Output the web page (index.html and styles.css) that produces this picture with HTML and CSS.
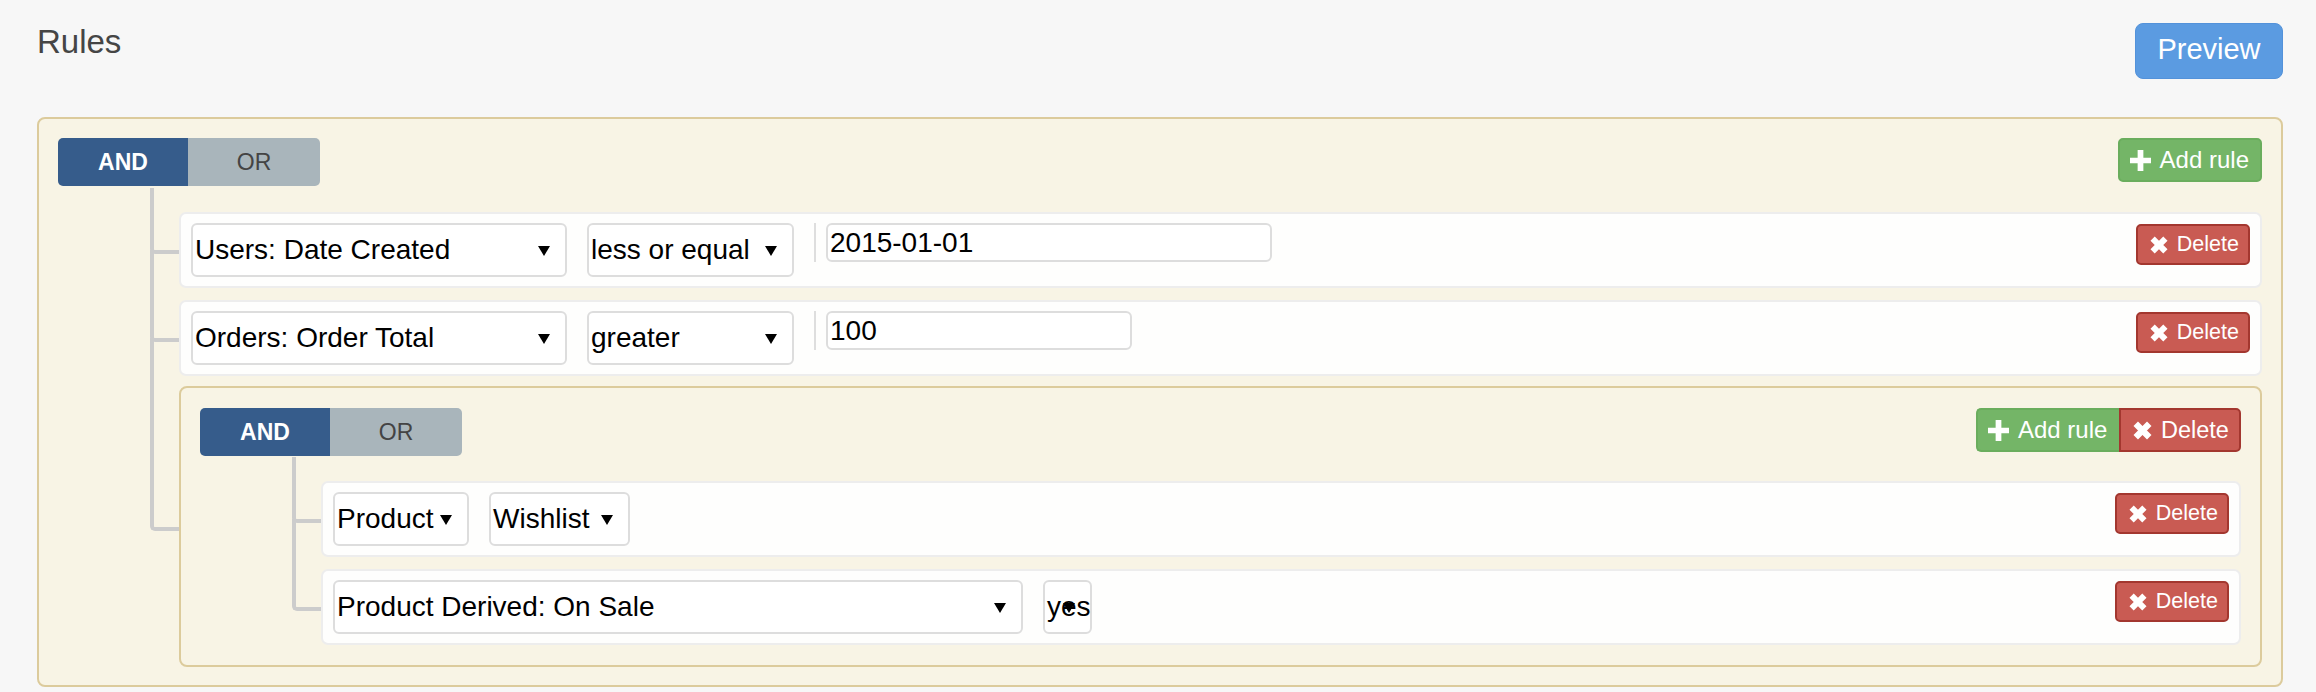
FILE: index.html
```html
<!DOCTYPE html>
<html lang="en">
<head>
<meta charset="utf-8">
<title>Rules</title>
<link rel="stylesheet" href="styles.css">
</head>
<body>
<div class="page">
  <div class="header">
    <h1 class="title">Rules</h1>
    <button class="btn btn-preview">Preview</button>
  </div>

  <div class="group group-root">
    <div class="group-header">
      <div class="toggle">
        <span class="toggle-opt active">AND</span>
        <span class="toggle-opt">OR</span>
      </div>
      <div class="actions">
        <button class="btn btn-success btn-sm">
          <svg class="ico-plus" viewBox="0 0 22 22"><path d="M8 0h6v8h8v6h-8v8H8v-8H0V8h8z" fill="currentColor"/></svg>
          <span>Add rule</span>
        </button>
      </div>
    </div>

    <ul class="rules-list">
      <li class="rule">
        <div class="rule-fields">
          <div class="select w-field">Users: Date Created<i class="caret"></i></div>
          <div class="select w-op">less or equal<i class="caret"></i></div>
          <div class="value-sep"></div>
          <div class="input w-date">2015-01-01</div>
        </div>
        <button class="btn btn-danger btn-xs">
          <svg class="ico-x" viewBox="0 0 18 18"><path d="M2.6 2.6 L15.4 15.4 M15.4 2.6 L2.6 15.4" stroke="currentColor" stroke-width="6"/></svg>
          <span>Delete</span>
        </button>
      </li>

      <li class="rule">
        <div class="rule-fields">
          <div class="select w-field">Orders: Order Total<i class="caret"></i></div>
          <div class="select w-op">greater<i class="caret"></i></div>
          <div class="value-sep"></div>
          <div class="input w-num">100</div>
        </div>
        <button class="btn btn-danger btn-xs">
          <svg class="ico-x" viewBox="0 0 18 18"><path d="M2.6 2.6 L15.4 15.4 M15.4 2.6 L2.6 15.4" stroke="currentColor" stroke-width="6"/></svg>
          <span>Delete</span>
        </button>
      </li>

      <li class="group group-nested">
        <div class="group-header">
          <div class="toggle">
            <span class="toggle-opt active">AND</span>
            <span class="toggle-opt">OR</span>
          </div>
          <div class="btn-group">
            <button class="btn btn-success btn-sm">
              <svg class="ico-plus" viewBox="0 0 22 22"><path d="M8 0h6v8h8v6h-8v8H8v-8H0V8h8z" fill="currentColor"/></svg>
              <span>Add rule</span>
            </button>
            <button class="btn btn-danger btn-sm">
              <svg class="ico-x ico-x-lg" viewBox="0 0 18 18"><path d="M2.6 2.6 L15.4 15.4 M15.4 2.6 L2.6 15.4" stroke="currentColor" stroke-width="6"/></svg>
              <span>Delete</span>
            </button>
          </div>
        </div>

        <ul class="rules-list rules-list-nested">
          <li class="rule">
            <div class="rule-fields">
              <div class="select w-product">Product<i class="caret"></i></div>
              <div class="select w-wishlist">Wishlist<i class="caret"></i></div>
            </div>
            <button class="btn btn-danger btn-xs">
              <svg class="ico-x" viewBox="0 0 18 18"><path d="M2.6 2.6 L15.4 15.4 M15.4 2.6 L2.6 15.4" stroke="currentColor" stroke-width="6"/></svg>
              <span>Delete</span>
            </button>
          </li>
          <li class="rule">
            <div class="rule-fields">
              <div class="select w-derived">Product Derived: On Sale<i class="caret"></i></div>
              <div class="select w-yes">yes<i class="caret"></i></div>
            </div>
            <button class="btn btn-danger btn-xs">
              <svg class="ico-x" viewBox="0 0 18 18"><path d="M2.6 2.6 L15.4 15.4 M15.4 2.6 L2.6 15.4" stroke="currentColor" stroke-width="6"/></svg>
              <span>Delete</span>
            </button>
          </li>
        </ul>
      </li>
    </ul>
  </div>
</div>
</body>
</html>
```

FILE: styles.css
```css
html, body {
  margin: 0;
  padding: 0;
}

body {
  background: #f7f7f7;
  font-family: "Liberation Sans", Arial, Helvetica, sans-serif;
  color: #000;
}

.page {
  padding: 23px 33px 0 37px;
}

/* ---------- header ---------- */
.header {
  display: flex;
  justify-content: space-between;
  align-items: flex-start;
  margin-bottom: 38px;
}

.title {
  margin: 2px 0 0;
  font-size: 33px;
  line-height: 33px;
  font-weight: normal;
  color: #454545;
}

/* ---------- buttons ---------- */
.btn {
  display: inline-flex;
  align-items: center;
  box-sizing: border-box;
  font-family: "Liberation Sans", Arial, Helvetica, sans-serif;
  color: #fff;
  cursor: pointer;
  margin: 0;
  white-space: nowrap;
}

.btn-preview {
  width: 148px;
  height: 56px;
  justify-content: center;
  padding: 0 0 3px;
  font-size: 29px;
  background: #5b9be1;
  border: 1px solid #5392da;
  border-radius: 8px;
}

.btn-success {
  background: #74b567;
  border: 2px solid #6aad5d;
}

.btn-danger {
  background: #c95b53;
  border: 2px solid #a3372f;
}

.btn-sm {
  height: 44px;
  font-size: 24px;
  border-radius: 5px;
  padding: 0 11px 0 10px;
  gap: 9px;
}

.btn-xs {
  height: 41px;
  font-size: 21.5px;
  border-radius: 5px;
  padding: 0 9px 0 12px;
  gap: 9px;
  margin-top: 1px;
}

.ico-plus {
  width: 21px;
  height: 21px;
  flex: none;
}

.ico-x {
  width: 18px;
  height: 18px;
  flex: none;
}

.ico-x-lg {
  width: 19px;
  height: 19px;
}

.btn-group {
  display: flex;
}

.btn-group .btn-success {
  border-radius: 5px 0 0 5px;
  border-right: none;
  width: 143px;
  padding-left: 10px;
}

.btn-group .btn-danger {
  border-radius: 0 5px 5px 0;
  width: 122px;
  padding-left: 12px;
  gap: 9px;
  font-size: 23.5px;
}

/* ---------- groups ---------- */
.group {
  background: #f8f4e5;
  border: 2px solid #dccb9c;
  border-radius: 8px;
}

.group-root {
  padding: 19px 19px 18px 19px;
}

.group-nested {
  padding: 20px 19px 20px 19px;
  margin-top: -2px;
}

.group-header {
  display: flex;
  justify-content: space-between;
  align-items: flex-start;
}

.toggle {
  display: flex;
  height: 48px;
  border-radius: 5px;
  overflow: hidden;
}

.toggle-opt {
  display: flex;
  align-items: center;
  justify-content: center;
  font-size: 23px;
  color: #444;
  background: #a9b5bb;
  width: 132px;
}

.toggle-opt.active {
  width: 130px;
  background: #365c8b;
  color: #fff;
  font-weight: bold;
}

/* ---------- rules list + tree lines ---------- */
.rules-list {
  list-style: none;
  margin: 26px 0 0;
  padding: 0 0 0 121px;
  display: flex;
  flex-direction: column;
  gap: 12px;
}

.rules-list-nested {
  margin-top: 25px;
}

.rules-list > li {
  position: relative;
}

.rules-list > li::before {
  content: "";
  position: absolute;
  left: -31px;
  top: -26px;
  width: 25px;
  height: calc(50% + 26px);
  border-left: 4px solid #cccccc;
  border-bottom: 4px solid #cccccc;
  border-bottom-left-radius: 5px;
}

.rules-list > li:not(:last-child)::after {
  content: "";
  position: absolute;
  left: -31px;
  top: 50%;
  height: calc(50% + 16px);
  border-left: 4px solid #cccccc;
}

/* ---------- rule row ---------- */
.rule {
  display: flex;
  justify-content: space-between;
  align-items: flex-start;
  background: #fefefd;
  border: 2px solid #ededed;
  border-radius: 7px;
  padding: 9px 10px;
}

.rule-fields {
  display: flex;
  align-items: flex-start;
  gap: 20px;
}

.select {
  position: relative;
  box-sizing: border-box;
  height: 54px;
  border: 2px solid #dddddd;
  border-radius: 6px;
  background: #fff;
  font-size: 28px;
  line-height: 50px;
  padding-left: 2px;
  white-space: nowrap;
}

.caret {
  position: absolute;
  right: 15px;
  top: 50%;
  margin-top: -4px;
  width: 0;
  height: 0;
  border-left: 6px solid transparent;
  border-right: 6px solid transparent;
  border-top: 10px solid #000;
}

.w-field { width: 376px; }
.w-op { width: 207px; }
.w-product { width: 136px; }
.w-wishlist { width: 141px; }
.w-derived { width: 690px; }
.w-yes { width: 49px; }

.value-sep {
  width: 2px;
  height: 39px;
  background: #dedede;
  margin-right: -10px;
}

.input {
  box-sizing: border-box;
  height: 39px;
  border: 2px solid #dddddd;
  border-radius: 6px;
  background: #fff;
  font-size: 28px;
  line-height: 35px;
  padding-left: 2px;
}

.w-date { width: 446px; }
.w-num { width: 306px; }
```
